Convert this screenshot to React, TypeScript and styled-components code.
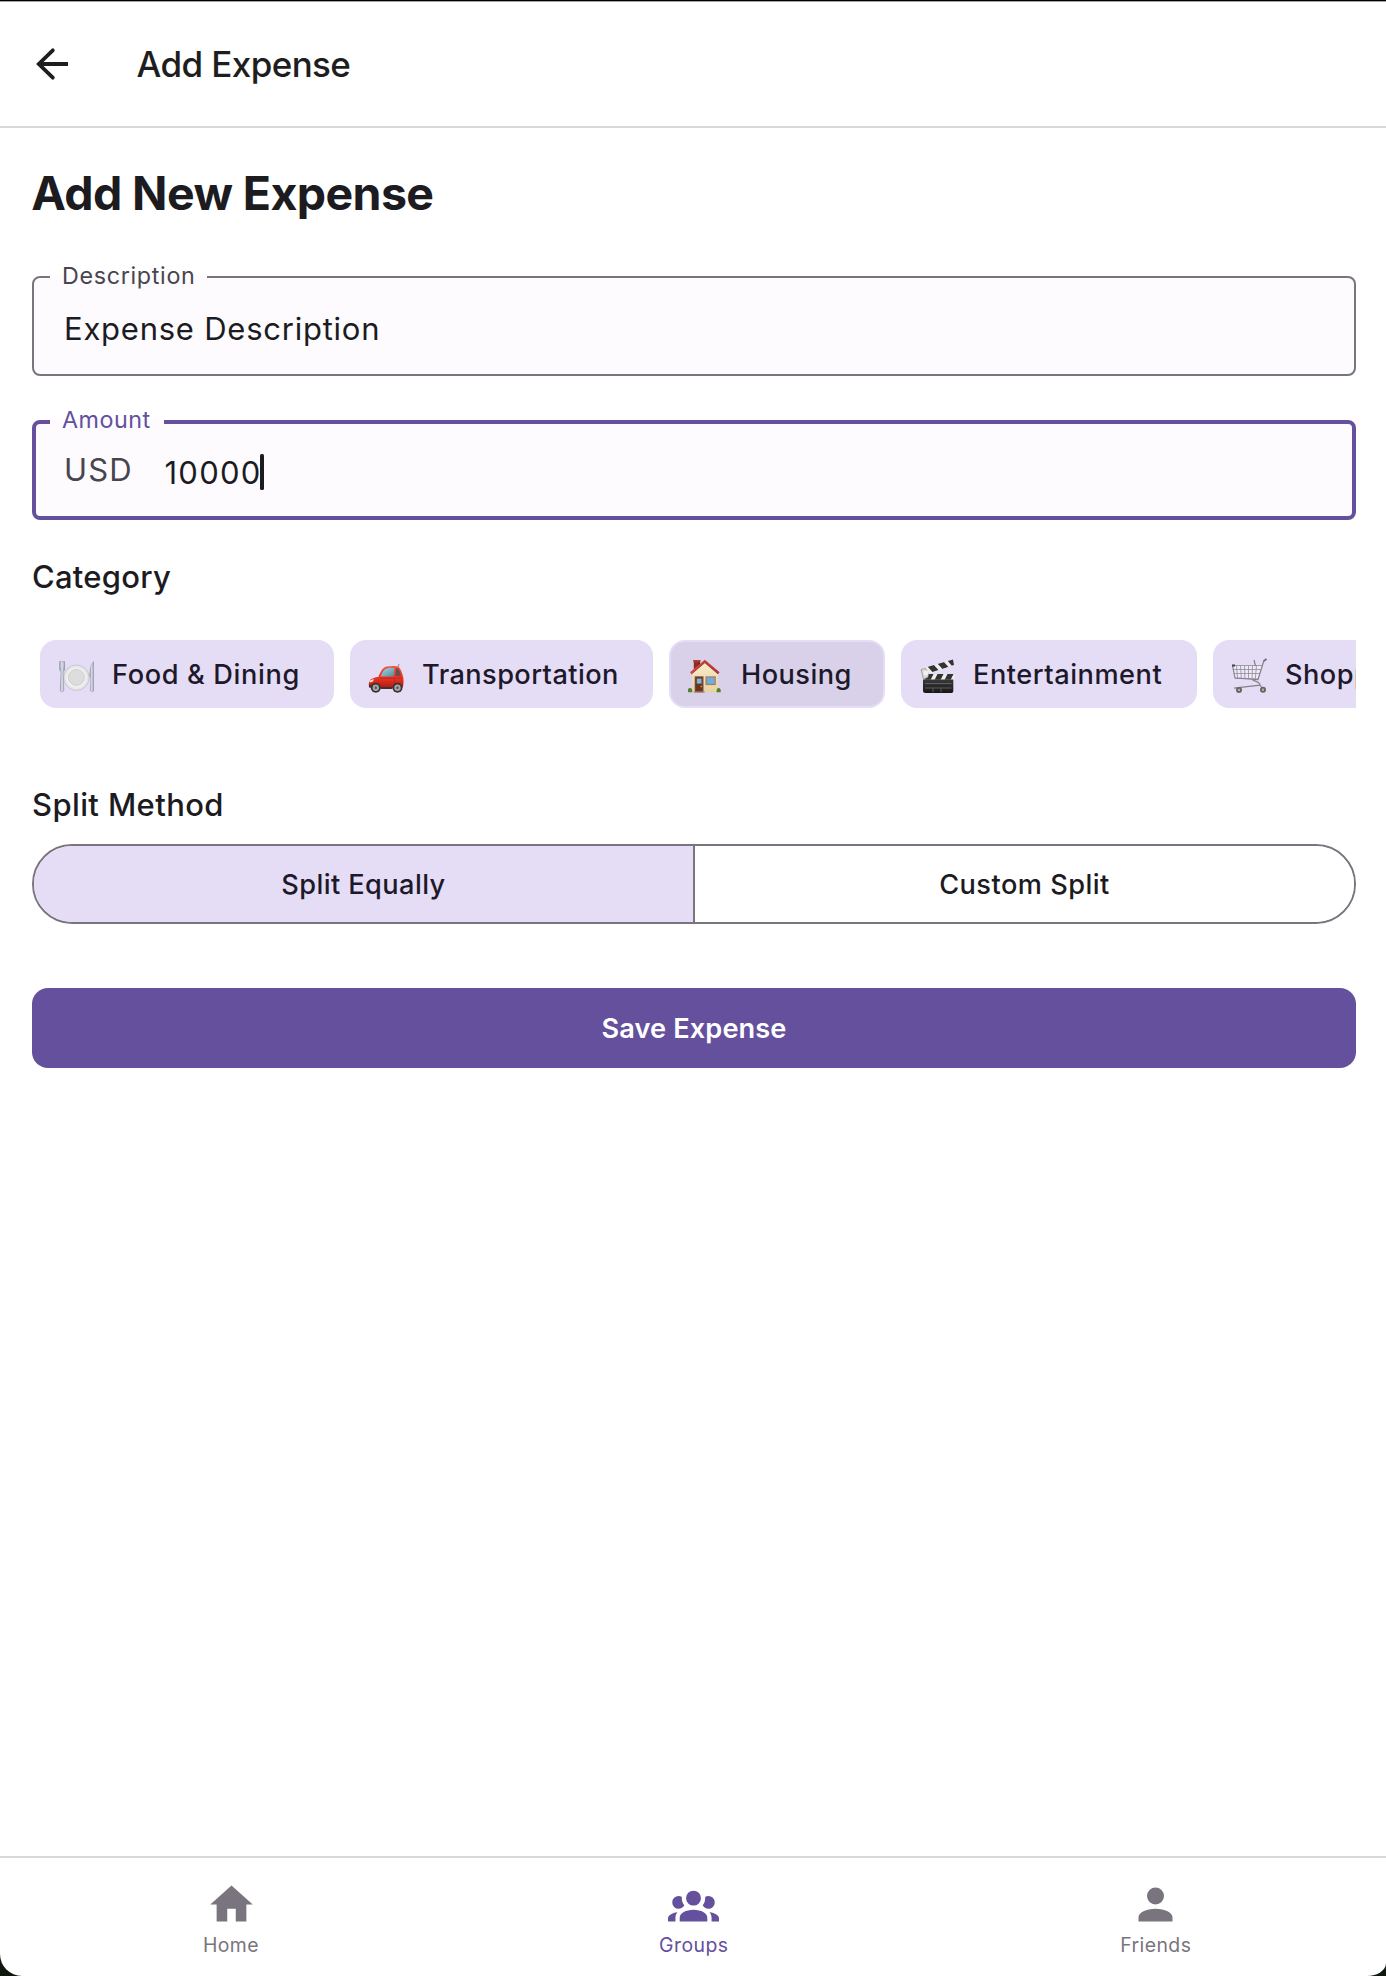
import React from "react";
import styled, { createGlobalStyle, css } from "styled-components";

const color = {
  primary: "#64509D",
  outline: "#79747E",
  muted: "#49454F",
  ink: "#1C1B1F",
  title: "#1E1E1E",
  surface: "#FDFBFE",
  chip: "#E5DDF6",
  chipSelected: "#D9D1E9",
  onChip: "#1D192B",
  divider: "#D8D8D8",
};

const GlobalStyle = createGlobalStyle`
  html { background: #10170d; }
  body {
    margin: 0;
    font-family: Inter, "Liberation Sans", sans-serif;
    color: ${color.ink};
    -webkit-font-smoothing: antialiased;
  }
  *, *::before, *::after { box-sizing: border-box; }
  button { font-family: inherit; color: inherit; margin: 0; }
`;

const Screen = styled.div`
  display: flex;
  flex-direction: column;
  width: 1386px;
  height: 1976px;
  background: #fff;
  border-top: 1px solid #000;
  border-radius: 0 0 19px 22px / 0 0 13px 22px;
  overflow: hidden;
`;

const Header = styled.header`
  display: flex;
  align-items: center;
  flex: none;
  height: 127px;
  padding: 0 28px;
  border-top: 1px solid #a3a3a3;
  border-bottom: 2px solid ${color.divider};
`;

const BackButton = styled.button`
  display: block;
  width: 48px;
  height: 48px;
  padding: 0;
  border: 0;
  background: none;
`;

const HeaderTitle = styled.div`
  margin-left: 60.5px;
  font-size: 35px;
  font-weight: 500;
  line-height: 48px;
  letter-spacing: -0.6px;
  color: ${color.title};
`;

const Content = styled.main`
  display: flex;
  flex-direction: column;
  flex: 1;
  min-height: 0;
  padding: 33px 30px 0 32px;
`;

const PageTitle = styled.h1`
  margin: 0 0 51px -0.8px;
  font-size: 46.5px;
  font-weight: 700;
  line-height: 64px;
  letter-spacing: -0.6px;
`;

const Field = styled.div<{ $focused?: boolean }>`
  position: relative;
  display: flex;
  align-items: center;
  flex: none;
  height: 100px;
  border-radius: 8px;
  background: ${color.surface};
  ${(p) =>
    p.$focused
      ? css`
          padding-left: 28px;
          border: 4px solid ${color.primary};
        `
      : css`
          padding-left: 30px;
          border: 2px solid ${color.outline};
        `}
  & + & {
    margin-top: 44px;
  }
`;

const FieldLabel = styled.label<{ $focused?: boolean; $width: number; $spacing: number }>`
  position: absolute;
  left: ${(p) => (p.$focused ? 14 : 16)}px;
  top: ${(p) => (p.$focused ? -20 : -18)}px;
  width: ${(p) => p.$width}px;
  height: 32px;
  padding-left: 12px;
  font-size: 23.3px;
  line-height: 31px;
  letter-spacing: ${(p) => p.$spacing}px;
  white-space: nowrap;
  color: ${(p) => (p.$focused ? color.primary : color.muted)};
  background: linear-gradient(transparent 15px, ${color.surface} 15px, ${color.surface} 24px, transparent 24px);
`;

const Prefix = styled.span`
  width: 100.5px;
  margin-top: 0.5px;
  font-size: 31px;
  line-height: 40px;
  letter-spacing: 1.1px;
  color: ${color.muted};
`;

const Value = styled.span<{ $spacing: number }>`
  margin-top: 5.4px;
  font-size: 31px;
  line-height: 40px;
  letter-spacing: ${(p) => p.$spacing}px;
`;

const Caret = styled.i`
  width: 4px;
  height: 36px;
  margin: 4px 0 0 -1.5px;
  border-radius: 1.5px;
  background: ${color.ink};
`;

const SectionTitle = styled.h2<{ $top: number; $spacing: number }>`
  margin: ${(p) => p.$top}px 0 0;
  font-size: 31px;
  font-weight: 500;
  line-height: 48px;
  letter-spacing: ${(p) => p.$spacing}px;
`;

const ChipRow = styled.div`
  display: flex;
  flex: none;
  gap: 16px;
  margin-top: 39px;
  padding-left: 8px;
  overflow: hidden;
`;

const Chip = styled.button<{ $width: number; $spacing: number; $selected?: boolean }>`
  display: flex;
  align-items: center;
  flex: none;
  gap: 18px;
  width: ${(p) => p.$width}px;
  height: 68px;
  padding: 1px 0 0 16px;
  border: 2px solid ${color.chip};
  border-radius: 16px;
  background: ${(p) => (p.$selected ? color.chipSelected : color.chip)};
  color: ${color.onChip};
  font-size: 27.2px;
  font-weight: 500;
  line-height: 41px;
  letter-spacing: ${(p) => p.$spacing}px;
  white-space: nowrap;
  svg {
    flex: none;
    margin-top: 2px;
  }
`;

const Segments = styled.div`
  display: flex;
  flex: none;
  height: 80px;
  margin-top: 15px;
  border: 2px solid ${color.outline};
  border-radius: 40px;
  overflow: hidden;
`;

const Segment = styled.button<{ $selected?: boolean; $spacing: number }>`
  flex: 1;
  padding: 2px 0 0;
  border: 0;
  background: ${(p) => (p.$selected ? color.chip : "#fff")};
  color: ${(p) => (p.$selected ? color.onChip : color.ink)};
  font-size: 27.2px;
  font-weight: 500;
  line-height: 40px;
  letter-spacing: ${(p) => p.$spacing}px;
  & + & {
    border-left: 2px solid ${color.outline};
  }
`;

const SaveButton = styled.button`
  flex: none;
  height: 80px;
  margin-top: 64px;
  padding: 2px 0 0;
  border: 0;
  border-radius: 16px;
  background: ${color.primary};
  color: #fff;
  font-size: 27.2px;
  font-weight: 600;
  line-height: 40px;
  letter-spacing: 0.1px;
`;

const TabBar = styled.nav`
  display: grid;
  grid-template-columns: repeat(3, 1fr);
  flex: none;
  height: 120px;
  border-top: 2px solid ${color.divider};
`;

const Tab = styled.a<{ $active?: boolean }>`
  display: flex;
  flex-direction: column;
  align-items: center;
  padding-top: 21px;
  color: ${(p) => (p.$active ? color.primary : color.outline)};
  font-size: 19.4px;
  line-height: 30px;
  letter-spacing: 0.45px;
  svg {
    display: block;
    fill: currentColor;
  }
  &:not(:first-child) span {
    padding-left: 1.5px;
  }
`;

const PlateIcon = () => (
  <svg width="36" height="36" viewBox="0 0 36 36">
    <defs>
      <linearGradient id="steel" x1="0" x2="1">
        <stop offset="0" stopColor="#8f96a6" />
        <stop offset=".5" stopColor="#dfe3ec" />
        <stop offset="1" stopColor="#868b9a" />
      </linearGradient>
      <radialGradient id="plate">
        <stop offset="0" stopColor="#e6e4e4" />
        <stop offset=".55" stopColor="#dad9db" />
        <stop offset=".66" stopColor="#f5f4f5" />
        <stop offset="1" stopColor="#dddcdf" />
      </radialGradient>
    </defs>
    <circle cx="18.4" cy="19.7" r="12.8" fill="url(#plate)" stroke="#bfbdc8" strokeWidth=".7" />
    <circle cx="18.4" cy="19.4" r="8" fill="#dedddd" stroke="#c9c8ca" strokeWidth=".8" />
    <path d="M1.6 3.600h5V11c0 1.600-.7 2.200-1.400 2.600L5.800 32c.1 2.400-3.700 2.400-3.600 0L3 13.600C2.300 13.200 1.600 12.600 1.600 11Z" fill="url(#steel)" stroke="#7f8496" strokeWidth=".4" />
    <path d="M3.300 3.500v6M5 3.500v6" stroke="#e5ddf6" strokeWidth=".5" />
    <path d="M35.500 3.500C32.800 6 31.800 11 31.800 19h1L32.300 32c0 2.400 3.600 2.400 3.400 0Z" fill="url(#steel)" stroke="#8b90a0" strokeWidth=".4" />
  </svg>
);

const CarIcon = () => (
  <svg width="36" height="36" viewBox="0 0 36 36">
    <defs>
      <linearGradient id="carBody" x2="0" y2="1">
        <stop offset="0" stopColor="#f3553f" />
        <stop offset=".6" stopColor="#e5301f" />
        <stop offset="1" stopColor="#a81a12" />
      </linearGradient>
      <linearGradient id="carGlass" x2="1" y2="1">
        <stop offset="0" stopColor="#a6d9e3" />
        <stop offset="1" stopColor="#538c9e" />
      </linearGradient>
    </defs>
    <path d="M30 9l1-2.800" stroke="#777" strokeWidth=".9" />
    <path d="M.8 27.500C.6 22 3 20 10.500 18.700 13 12 15.500 9.200 19 8.500c4-.7 9-.8 11.700.4 2 1.500 3.400 6.100 4.500 10.100.5 3 .4 7-.2 10l-3 1.500H6L1 29Z" fill="url(#carBody)" />
    <path d="M12.500 18.500c2-5 4-7.700 7-8.300 2.300-.4 5-.4 6.800-.2l-.7 8.500Z" fill="url(#carGlass)" />
    <path d="M28 10.300c1.700.2 2.400.6 3 1.700 1 2 1.600 4 2 6.300h-5.600Z" fill="#6b4c50" />
    <path d="M12 20.200h22M26.500 20v8" stroke="#b51f15" strokeWidth=".7" fill="none" />
    <path d="M1.500 22.800l4.300-1.700-.8 2.500-3.300.8Z" fill="#ffe1d2" />
    <path d="M1 27h3v2.500H1ZM13 29h11v2H13Z" fill="#42302f" />
    <circle cx="7.800" cy="29.700" r="5" fill="#353433" />
    <circle cx="7.800" cy="29.700" r="3.200" fill="#a6a5a3" />
    <circle cx="7.800" cy="29.700" r="1.200" fill="#555" />
    <circle cx="29.500" cy="29.700" r="5" fill="#353433" />
    <circle cx="29.500" cy="29.700" r="3.200" fill="#a6a5a3" />
    <circle cx="29.500" cy="29.700" r="1.200" fill="#555" />
  </svg>
);

const HouseIcon = () => (
  <svg width="36" height="36" viewBox="-.8 0 36 36">
    <defs>
      <linearGradient id="wall" x2="0" y2="1">
        <stop offset="0" stopColor="#fbeccb" />
        <stop offset="1" stopColor="#e7d1a2" />
      </linearGradient>
      <linearGradient id="roof" x2="1">
        <stop offset="0" stopColor="#d8493f" />
        <stop offset="1" stopColor="#b8322d" />
      </linearGradient>
    </defs>
    <path d="M6 2.500h6.200V12H6Z" fill="#8e2b22" />
    <path d="M5.500 2h7.200v2.200H5.500Z" fill="#a93d2e" />
    <path d="M11 4.200h1.200V10H11Z" fill="#5e211a" />
    <path d="M4.300 15.500L17 4l13 11.500v18.800H4.300Z" fill="url(#wall)" />
    <path d="M17 1.700L31.800 14.200 30.300 16 17 4.700 3.700 16 2.200 14.200Z" fill="url(#roof)" />
    <path d="M3.700 16L17 4.700 30.300 16" fill="none" stroke="#7e2c23" strokeWidth=".7" />
    <path d="M6.900 18.300h8.800v16H6.900Z" fill="#7a4a35" />
    <path d="M8 19.400h6.600v14.200H8Z" fill="#693521" />
    <path d="M9 20.600h4.700v5H9Z" fill="#7db8dc" />
    <circle cx="13.500" cy="28.500" r=".8" fill="#dbb164" />
    <path d="M17.700 18.300H28v8.800H17.700Z" fill="#9c8163" />
    <path d="M19 19.500h7.700v6.300H19Z" fill="#73acdb" />
    <path d="M6 33.500h11v1.200H6Z" fill="#9f8c83" />
    <path d="M.3 34.300c-.7-2.700.4-4.300 2-4.200 1.700.1 2.400 1.500 2.200 4.200ZM28.800 34.300c-.3-2.700.7-4.200 2-4.200 1.700.1 2.600 1.700 2 4.200Z" fill="#55802b" />
  </svg>
);

const ClapperIcon = () => (
  <svg width="36" height="36" viewBox="0 0 36 36">
    <defs>
      <linearGradient id="slate" x2="0" y2="1">
        <stop offset="0" stopColor="#393939" />
        <stop offset="1" stopColor="#171717" />
      </linearGradient>
      <clipPath id="upperBar"><path d="M1.500 11L34 1.500 35 7 3 18.300Z" /></clipPath>
      <clipPath id="lowerBar"><path d="M4 16h31.500v5.800H4Z" /></clipPath>
    </defs>
    <g clipPath="url(#upperBar)">
      <path d="M0 0h36v20H0Z" fill="#eeeeed" />
      <path d="M8 8l6-2 5.500 6-6 2ZM18 5l6-2 5.500 6-6 2ZM28 2l5-2 6 6-6 2Z" fill="#333" />
    </g>
    <g clipPath="url(#lowerBar)">
      <path d="M0 14h36v9H0Z" fill="#eeeeed" />
      <path d="M9 15h6l-4 8H5ZM19 15h6l-4 8h-6ZM29 15h6l-4 8h-6Z" fill="#333" />
    </g>
    <path d="M2 11.500l4.500-1.200 3 5L9 19.500 4.500 21Z" fill="#d8d8d6" stroke="#777" strokeWidth=".6" />
    <circle cx="7" cy="15" r="2.600" fill="#f0f0ee" />
    <path d="M4 21.500h30.300V33c0 1.400-1 2-2.300 2H6.500C5 35 4 34.300 4 33Z" fill="url(#slate)" />
    <path d="M6 25.500h26.500M6 30h26.500M14 30.500v3.500M22 30.500v3.500" stroke="#777" strokeWidth=".7" />
  </svg>
);

const CartIcon = () => (
  <svg width="36" height="36" viewBox="0 0 36 36" fill="none">
    <path d="M1.500 7.500L31 7.500 27 21 4 20Z" fill="#fff" fillOpacity=".35" />
    <path d="M1.500 7.500L31 7.500M2.500 11.500h27M3 15.500h25.500M4 20l23 1M5.500 7.500l1 12.500M9.500 7.500l.8 12.500M13.500 7.500l.4 12.700M17.500 7.500v12.900M21.500 7.500l-.4 13.200M25.500 7.500l-1.200 13.300" stroke="#8f8c94" strokeWidth=".8" />
    <path d="M35.500 1.200L32.800 3 27 21.500 4 20 1.500 7.500M23 2l1.500 6M21 21.500c4 2.500 8 2 8 5.700L3 30.200M29 27l3 4" stroke="#85828a" strokeWidth="1.200" />
    <path d="M1 6.500h3v2H1Z" fill="#38404f" />
    <path d="M32.700 3l2.800-2" stroke="#77737c" strokeWidth="1.700" />
    <circle cx="8" cy="32" r="3" fill="#66635f" />
    <circle cx="8" cy="32" r="1.200" fill="#b5b2ab" />
    <circle cx="32" cy="31.700" r="3" fill="#66635f" />
    <circle cx="32" cy="31.700" r="1.200" fill="#b5b2ab" />
  </svg>
);

const categories = [
  { name: "Food & Dining", icon: <PlateIcon />, width: 294, spacing: 0.62 },
  { name: "Transportation", icon: <CarIcon />, width: 303, spacing: 0.42 },
  { name: "Housing", icon: <HouseIcon />, width: 216, spacing: 0.45, selected: true },
  { name: "Entertainment", icon: <ClapperIcon />, width: 296, spacing: 0.52 },
  { name: "Shopping", icon: <CartIcon />, width: 230, spacing: 0.45 },
];

const tabs = [
  { name: "Home", path: "M10,20V14H14V20H19V12H22L12,3L2,12H5V20H10Z" },
  {
    name: "Groups",
    active: true,
    path: "M12,5.5A3.5,3.5 0 0,1 15.5,9A3.5,3.5 0 0,1 12,12.5A3.5,3.5 0 0,1 8.5,9A3.5,3.5 0 0,1 12,5.5M5,8C5.56,8 6.08,8.15 6.53,8.42C6.38,9.85 6.8,11.27 7.66,12.38C7.16,13.34 6.16,14 5,14A3,3 0 0,1 2,11A3,3 0 0,1 5,8M19,8A3,3 0 0,1 22,11A3,3 0 0,1 19,14C17.84,14 16.84,13.34 16.34,12.38C17.2,11.27 17.62,9.85 17.47,8.42C17.92,8.15 18.44,8 19,8M5.5,18.25C5.5,16.18 8.41,14.5 12,14.5C15.59,14.5 18.5,16.18 18.5,18.25V20H5.5V18.25M0,20V18.5C0,17.11 1.89,15.94 4.45,15.6C3.86,16.28 3.5,17.22 3.5,18.25V20H0M24,20H20.5V18.25C20.5,17.22 20.14,16.28 19.55,15.6C22.11,15.94 24,17.11 24,18.5V20Z",
  },
  {
    name: "Friends",
    path: "M12,4A4,4 0 0,1 16,8A4,4 0 0,1 12,12A4,4 0 0,1 8,8A4,4 0 0,1 12,4M12,14C16.42,14 20,15.79 20,18V20H4V18C4,15.79 7.58,14 12,14Z",
  },
];

export default function App() {
  return (
    <>
      <GlobalStyle />
      <Screen>
        <Header>
          <BackButton aria-label="Back">
            <svg width="48" height="48" viewBox="0 0 48 48" fill="none" stroke={color.title} strokeWidth="3.8">
              <path d="M40 24H11" />
              <path d="M24.800 10.300L10.800 24 24.800 37.700" strokeLinecap="round" />
            </svg>
          </BackButton>
          <HeaderTitle>Add Expense</HeaderTitle>
        </Header>
        <Content>
          <PageTitle>Add New Expense</PageTitle>
          <Field>
            <FieldLabel $width={157} $spacing={0.68}>Description</FieldLabel>
            <Value $spacing={0.76}>Expense Description</Value>
          </Field>
          <Field $focused>
            <FieldLabel $focused $width={114} $spacing={0.5}>Amount</FieldLabel>
            <Prefix>USD</Prefix>
            <Value $spacing={1.26}>10000</Value>
            <Caret />
          </Field>
          <SectionTitle $top={33} $spacing={0.24}>Category</SectionTitle>
          <ChipRow>
            {categories.map((c) => (
              <Chip key={c.name} $width={c.width} $spacing={c.spacing} $selected={c.selected}>
                {c.icon}
                {c.name}
              </Chip>
            ))}
          </ChipRow>
          <SectionTitle $top={73} $spacing={0.38}>Split Method</SectionTitle>
          <Segments>
            <Segment $selected $spacing={0.4}>Split Equally</Segment>
            <Segment $spacing={0.47}>Custom Split</Segment>
          </Segments>
          <SaveButton>Save Expense</SaveButton>
        </Content>
        <TabBar>
          {tabs.map((t) => (
            <Tab key={t.name} $active={t.active}>
              <svg width="51" height="51" viewBox="0 0 24 24">
                <path d={t.path} />
              </svg>
              <span>{t.name}</span>
            </Tab>
          ))}
        </TabBar>
      </Screen>
    </>
  );
}
